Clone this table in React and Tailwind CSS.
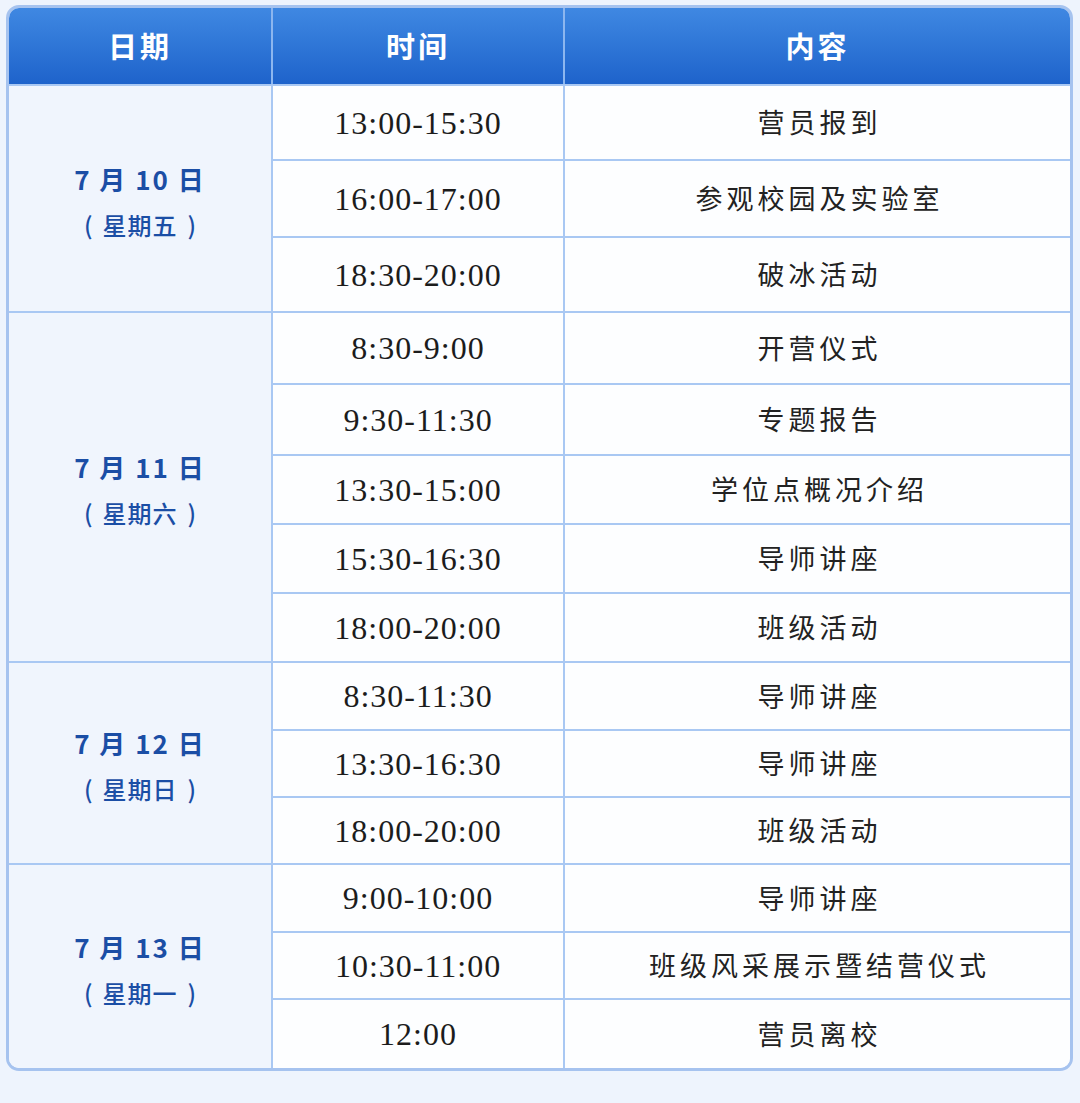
import React from 'react';

const schedule = [
  {
    date: '7 月 10 日',
    week: '星期五',
    rows: [
      ['13:00-15:30', '营员报到', 'h-[73px]'],
      ['16:00-17:00', '参观校园及实验室', 'h-[77px]'],
      ['18:30-20:00', '破冰活动', 'h-[75px]'],
    ],
  },
  {
    date: '7 月 11 日',
    week: '星期六',
    rows: [
      ['8:30-9:00', '开营仪式', 'h-[70px]'],
      ['9:30-11:30', '专题报告', 'h-[71px]'],
      ['13:30-15:00', '学位点概况介绍', 'h-[69px]'],
      ['15:30-16:30', '导师讲座', 'h-[69px]'],
      ['18:00-20:00', '班级活动', 'h-[69px]'],
    ],
  },
  {
    date: '7 月 12 日',
    week: '星期日',
    rows: [
      ['8:30-11:30', '导师讲座', 'h-[66px]'],
      ['13:30-16:30', '导师讲座', 'h-[67px]'],
      ['18:00-20:00', '班级活动', 'h-[67px]'],
    ],
  },
  {
    date: '7 月 13 日',
    week: '星期一',
    rows: [
      ['9:00-10:00', '导师讲座', 'h-[66px]'],
      ['10:30-11:00', '班级风采展示暨结营仪式', 'h-[67px]'],
      ['12:00', '营员离校', 'h-[70px]'],
    ],
  },
];

const cjk = { fontFamily: '"Noto Sans CJK SC", "Noto Sans", sans-serif' };
const serif = { fontFamily: '"Liberation Serif", "Noto Sans CJK SC", serif' };

export default function App() {
  return (
    <div className="w-[1080px] h-[1103px] bg-[#eef4fd] pt-[5px] pl-[6px] pr-[7px]" style={cjk}>
      <div className="rounded-[13px] border-[3px] border-[#a6c3ef] overflow-hidden bg-white">
        {/* en-tête */}
        <div className="flex h-[76px] bg-gradient-to-b from-[#3f88e2] to-[#1e63cb] text-white font-bold text-[29px] tracking-[3px]">
          <div className="w-[262px] flex items-center justify-center">日期</div>
          <div className="w-[2px] bg-[#8cb6ef]" />
          <div className="w-[290px] flex items-center justify-center">时间</div>
          <div className="w-[2px] bg-[#8cb6ef]" />
          <div className="flex-1 flex items-center justify-center">内容</div>
        </div>

        {schedule.map((g, gi) => (
          <div key={gi} className="flex border-t-2 border-[#a9c8f3]">
            <div className="w-[262px] bg-[#f0f5fd] flex flex-col items-center justify-center text-[#1b4ea5] pt-[8px]">
              <div className="text-[26px] font-bold leading-[40px] tracking-[2px]">{g.date}</div>
              <div className="flex items-center gap-[10px] text-[24px] font-medium leading-[44px] mt-[4px]">
                <span>(</span>
                <span className="tracking-[1px]">{g.week}</span>
                <span>)</span>
              </div>
            </div>
            <div className="w-[2px] bg-[#a9c8f3]" />
            <div className="flex-1 flex flex-col">
              {g.rows.map(([t, c, h], ri) => (
                <div
                  key={ri}
                  className={`flex ${h} ${ri > 0 ? 'border-t-2 border-[#a9c8f3]' : ''} bg-[#fdfeff]`}
                >
                  <div className="w-[290px] flex items-center justify-center text-[32px] tracking-[1px] text-[#1c1c1c]" style={serif}>
                    {t}
                  </div>
                  <div className="w-[2px] bg-[#a9c8f3]" />
                  <div className="flex-1 flex items-center justify-center text-[27px] text-[#222] tracking-[4px] pl-[4px]">
                    {c}
                  </div>
                </div>
              ))}
            </div>
          </div>
        ))}
      </div>
    </div>
  );
}
